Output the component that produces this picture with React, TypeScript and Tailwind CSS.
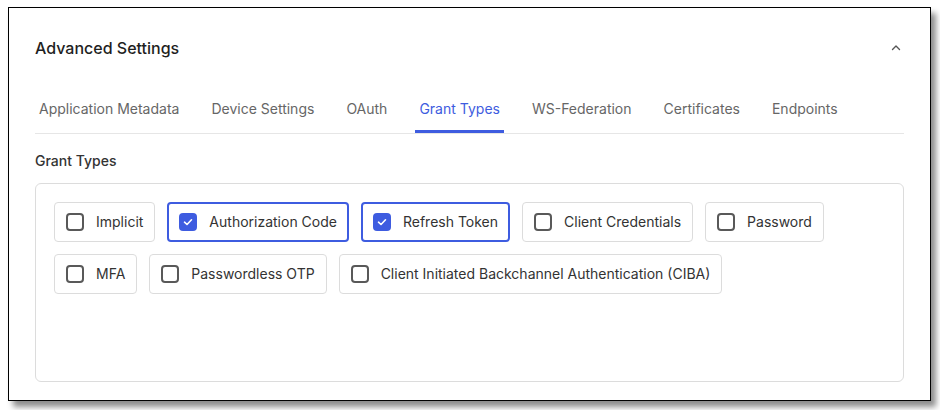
import React, { useState } from 'react';

const TABS = ['Application Metadata', 'Device Settings', 'OAuth', 'Grant Types', 'WS-Federation', 'Certificates', 'Endpoints'];

const GRANTS: { label: string; checked: boolean }[][] = [
  [
    { label: 'Implicit', checked: false },
    { label: 'Authorization Code', checked: true },
    { label: 'Refresh Token', checked: true },
    { label: 'Client Credentials', checked: false },
    { label: 'Password', checked: false },
  ],
  [
    { label: 'MFA', checked: false },
    { label: 'Passwordless OTP', checked: false },
    { label: 'Client Initiated Backchannel Authentication (CIBA)', checked: false },
  ],
];

const GrantOption: React.FC<{ label: string; checked: boolean; onToggle: () => void }> = ({ label, checked, onToggle }) => (
  <button
    onClick={onToggle}
    className={`h-10 flex items-center gap-3 rounded-[4px] bg-white ${
      checked ? 'border-2 border-[#3e5ce0] px-[10px]' : 'border border-[#dcdcdc] px-[11px]'
    }`}
  >
    {checked ? (
      <span className="w-[18px] h-[18px] rounded-[4px] bg-[#3e5ce0] flex items-center justify-center">
        <svg width="12" height="12" viewBox="0 0 12 12" fill="none">
          <path d="M2.5 6.2 L5 8.5 L9.5 3.8" stroke="white" strokeWidth="1.6" strokeLinecap="round" strokeLinejoin="round" />
        </svg>
      </span>
    ) : (
      <span className="w-[18px] h-[18px] rounded-[4px] border-2 border-[#595959] bg-white" />
    )}
    <span className="text-[14px] leading-5 text-[#333333]">{label}</span>
  </button>
);

export default function App() {
  const [active, setActive] = useState('Grant Types');
  const [grants, setGrants] = useState(GRANTS);

  const toggle = (r: number, i: number) => {
    setGrants(g => g.map((row, ri) => row.map((item, ii) => (ri === r && ii === i ? { ...item, checked: !item.checked } : item))));
  };

  return (
    <div className="w-[940px] h-[410px] bg-white pl-[8px] pt-[7px]" style={{ fontFamily: 'Inter, "Noto Sans", sans-serif' }}>
      <div className="w-[923px] h-[394px] border border-black bg-white shadow-[5px_6px_6px_rgba(0,0,0,0.45)] px-[26px] pt-[28px]">
        <div className="flex items-center justify-between">
          <h2 className="text-[16px] leading-6 font-medium text-[#1f1f1f]">Advanced Settings</h2>
          <svg width="12" height="12" viewBox="0 0 12 12" fill="none" className="mr-[2px]">
            <path d="M2.5 7.5 L6 4 L9.5 7.5" stroke="#555" strokeWidth="1.4" strokeLinecap="round" strokeLinejoin="round" />
          </svg>
        </div>

        <div className="mt-[39px] flex gap-6 border-b border-[#e6e6e6]">
          {TABS.map(tab => (
            <button
              key={tab}
              onClick={() => setActive(tab)}
              className={`px-1 pb-[11px] text-[14px] leading-5 border-b-[3px] ${
                active === tab ? 'border-[#3e5ce0] text-[#3e5ce0]' : 'border-transparent text-[#666666]'
              }`}
            >
              {tab}
            </button>
          ))}
        </div>

        <div className="mt-[17px] text-[14px] leading-5 font-medium text-[#333333]">Grant Types</div>

        <div className="mt-[12px] h-[199px] border border-[#dcdcdc] rounded-[6px] p-[18px] flex flex-col gap-3">
          {grants.map((row, r) => (
            <div key={r} className="flex gap-3">
              {row.map((g, i) => (
                <GrantOption key={g.label} label={g.label} checked={g.checked} onToggle={() => toggle(r, i)} />
              ))}
            </div>
          ))}
        </div>
      </div>
    </div>
  );
}
